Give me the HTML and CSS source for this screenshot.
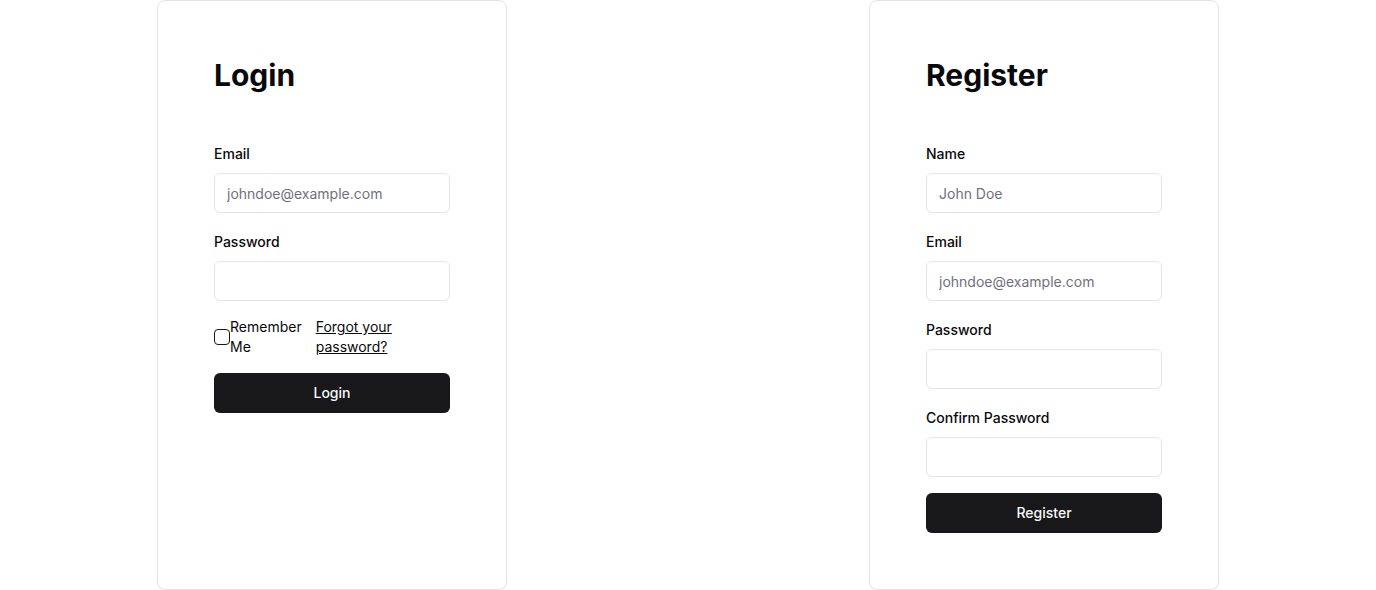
FILE: index.html
```html
<!DOCTYPE html>
<html lang="en">
<head>
<meta charset="utf-8">
<title>Login / Register</title>
<link rel="stylesheet" href="styles.css">
</head>
<body>
<main class="page">
  <section class="card">
    <h1 class="title">Login</h1>
    <form class="form">
      <div class="field">
        <label class="label" for="l-email">Email</label>
        <input class="input" id="l-email" type="email" placeholder="johndoe@example.com">
      </div>
      <div class="field">
        <label class="label" for="l-pass">Password</label>
        <input class="input" id="l-pass" type="password">
      </div>
      <div class="row">
        <label class="remember">
          <input class="checkbox" type="checkbox">
          <span class="remember-text">Remember Me</span>
        </label>
        <a class="forgot" href="#">Forgot your password?</a>
      </div>
      <button class="button" type="button">Login</button>
    </form>
  </section>
  <section class="card">
    <h1 class="title">Register</h1>
    <form class="form">
      <div class="field">
        <label class="label" for="r-name">Name</label>
        <input class="input" id="r-name" type="text" placeholder="John Doe">
      </div>
      <div class="field">
        <label class="label" for="r-email">Email</label>
        <input class="input" id="r-email" type="email" placeholder="johndoe@example.com">
      </div>
      <div class="field">
        <label class="label" for="r-pass">Password</label>
        <input class="input" id="r-pass" type="password">
      </div>
      <div class="field">
        <label class="label" for="r-confirm">Confirm Password</label>
        <input class="input" id="r-confirm" type="password">
      </div>
      <button class="button" type="button">Register</button>
    </form>
  </section>
</main>
</body>
</html>
```

FILE: styles.css
```css
* { box-sizing: border-box; }

html, body {
  margin: 0;
  padding: 0;
  background: #ffffff;
  font-family: Inter, "Noto Sans", "Liberation Sans", sans-serif;
  color: #09090b;
}

.page {
  display: grid;
  grid-template-columns: 1fr 1fr;
  column-gap: 48px;
  align-items: stretch;
}

.card {
  justify-self: center;
  width: 350px;
  border: 1px solid #e4e4e7;
  border-radius: 8px;
  padding: 56px 56px 56px;
  background: #fff;
  box-shadow: 0 1px 2px rgba(0, 0, 0, 0.04);
}

.title {
  margin: 0 0 51px;
  font-size: 30px;
  line-height: 36px;
  font-weight: 700;
  letter-spacing: 0;
}

.form {
  display: flex;
  flex-direction: column;
  gap: 16px;
}

.field {
  display: flex;
  flex-direction: column;
  gap: 9px;
}

.field + .field {
  margin-top: 3px;
}

.label {
  font-size: 14px;
  line-height: 20px;
  font-weight: 500;
}

.input {
  height: 40px;
  width: 100%;
  border: 1px solid #e4e4e7;
  border-radius: 6px;
  padding: 0 12px;
  font-family: inherit;
  font-size: 14px;
  color: #09090b;
  background: #fff;
  outline: none;
}

.input::placeholder {
  color: #71717a;
}

.row {
  display: flex;
  align-items: center;
  gap: 14px;
  font-size: 14px;
  line-height: 20px;
}

.remember {
  display: flex;
  align-items: center;
}

.checkbox {
  appearance: none;
  -webkit-appearance: none;
  width: 16px;
  height: 16px;
  margin: 0;
  flex: none;
  border: 1px solid #18181b;
  border-radius: 4px;
  background: #fff;
}

.remember-text {
  width: min-content;
}

.forgot {
  width: 80px;
  color: #09090b;
  text-decoration: underline;
}

.button {
  height: 40px;
  width: 100%;
  border: none;
  border-radius: 6px;
  padding: 0 0 2px;
  background: #18181b;
  color: #fafafa;
  font-family: inherit;
  font-size: 14px;
  font-weight: 500;
}
```
